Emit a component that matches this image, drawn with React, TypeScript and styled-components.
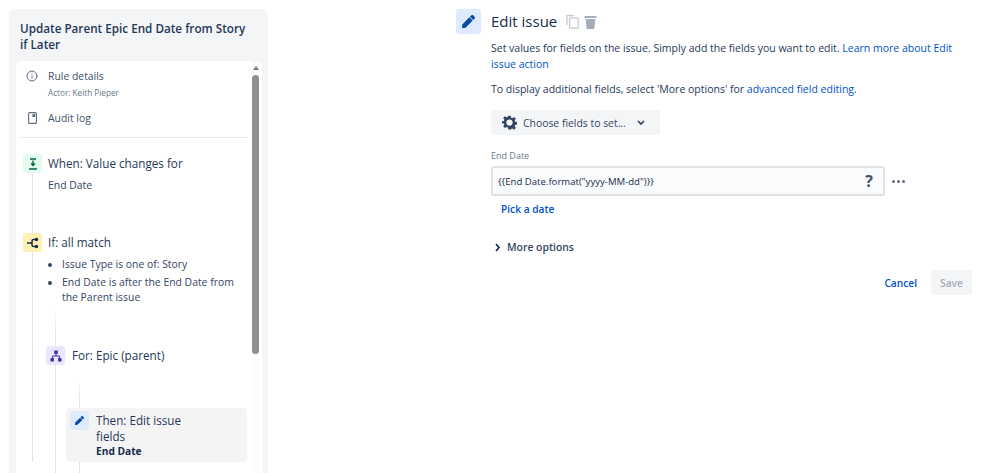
import React from 'react'
import styled, { createGlobalStyle } from 'styled-components'
import { FaPen } from 'react-icons/fa'
import { FiInfo } from 'react-icons/fi'

const GlobalStyle = createGlobalStyle`
    html, body {
        margin: 0;
        height: 473px;
        overflow: hidden;
        background: #fff;
        font-family: "Open Sans", "Noto Sans", sans-serif;
        color: #172b4d;
    }
`;

const Layout = styled.div`
    display: flex;
    align-items: flex-start;
    height: 473px;
    overflow: hidden;
`;

const Sidebar = styled.aside`
    box-sizing: border-box;
    width: 259px;
    height: 464px;
    margin: 9px 0 0 9px;
    padding: 11px 6px 0 7px;
    background: #f4f5f7;
    border-radius: 6px 6px 0 0;
    flex-shrink: 0;
`;

const SidebarTitle = styled.h2`
    margin: 0 0 9px 4px;
    width: 228px;
    font-size: 11.7px;
    line-height: 16px;
    font-weight: 600;
    color: #253858;
`;

const SidebarCard = styled.div`
    position: relative;
    height: 412px;
    background: #fff;
    border-radius: 5px 5px 0 0;
    overflow: hidden;
`;

const MetaRow = styled.div<{ $top: number }>`
    display: flex;
    gap: 9px;
    padding: ${p => p.$top}px 0 0 9px;
    color: #42526e;
`;

const MetaIcon = styled.span`
    width: 14px;
    height: 14px;
    display: flex;
    align-items: center;
    justify-content: center;
    color: #5e6c84;
    flex-shrink: 0;
`;

const MetaLabel = styled.div`
    font-size: 10.4px;
    line-height: 14px;
`;

const MetaSub = styled.div`
    font-size: 8.2px;
    line-height: 11px;
    margin-top: 4px;
    color: #6b778c;
`;

const Divider = styled.hr`
    border: 0;
    height: 1px;
    background: #e6e8ec;
    margin: 12px 15px 0 3px;
`;

const Flow = styled.div`
    position: relative;
    padding: 16px 0 0 7px;
    &::before {
        content: '';
        position: absolute;
        left: 16px;
        top: 36px;
        bottom: 0;
        width: 1px;
        background: #e2e4ea;
    }
`;

const Step = styled.div<{ $spacing?: number; $after?: number }>`
    position: relative;
    display: flex;
    gap: ${p => p.$spacing ?? 6}px;
    margin-bottom: ${p => p.$after ?? 0}px;
`;

const StepIcon = styled.span<{ $bg: string; $color: string }>`
    width: 19px;
    height: 19px;
    border-radius: 3px;
    background: ${p => p.$bg};
    color: ${p => p.$color};
    display: flex;
    align-items: center;
    justify-content: center;
    flex-shrink: 0;
    position: relative;
`;

const StepBody = styled.div`
    min-width: 0;
`;

const StepTitle = styled.div`
    font-size: 11.7px;
    line-height: 16px;
    color: #253858;
    padding-top: 1px;
`;

const StepDetail = styled.div`
    font-size: 10.4px;
    line-height: 15px;
    margin-top: 7px;
    color: #344563;
`;

const Conditions = styled.ul`
    margin: 7px 0 0;
    padding: 0 0 0 14px;
    width: 176px;
    font-size: 10.4px;
    line-height: 15px;
    color: #344563;
    li {
        margin-bottom: 3px;
    }
`;

const Nested = styled.div<{ $left: number; $top: number; $lineTop: number }>`
    position: relative;
    margin-left: ${p => p.$left}px;
    padding-top: ${p => p.$top}px;
    &::before {
        content: '';
        position: absolute;
        left: 9px;
        top: ${p => p.$lineTop}px;
        height: 400px;
        width: 1px;
        background: linear-gradient(#ffffff00, #e2e4ea 24px);
    }
`;

const ActiveStep = styled.div`
    position: relative;
    box-sizing: border-box;
    width: 181px;
    height: 54px;
    margin-left: -4px;
    padding: 3px 4px;
    display: flex;
    gap: 7px;
    background: #f4f4f4;
    border-radius: 4px;
`;

const ActiveBody = styled.div`
    padding-top: 2px;
`;

const ActiveTitle = styled.div`
    font-size: 11.7px;
    line-height: 15.5px;
    width: 90px;
    color: #253858;
`;

const ActiveDetail = styled.div`
    font-size: 10.2px;
    line-height: 15px;
    font-weight: 700;
    color: #172b4d;
`;

const ScrollTrack = styled.div`
    position: absolute;
    top: 0;
    right: 3px;
    bottom: 0;
    width: 7px;
    background: #fbfbfb;
`;

const ScrollArrow = styled.div`
    width: 0;
    height: 0;
    margin: 5px auto 5px;
    border-left: 3px solid transparent;
    border-right: 3px solid transparent;
    border-bottom: 4px solid #7a7a7a;
`;

const ScrollThumb = styled.div`
    height: 279px;
    border-radius: 4px;
    background: #8f8f8f;
`;

const Main = styled.main`
    display: flex;
    gap: 10px;
    margin: 9px 0 0 188px;
    width: 516px;
    flex-shrink: 0;
`;

const HeadIcon = styled.span`
    width: 25px;
    height: 25px;
    border-radius: 3px;
    background: #deebff;
    color: #0747a6;
    display: flex;
    align-items: center;
    justify-content: center;
    flex-shrink: 0;
`;

const Content = styled.div`
    flex: 1;
    min-width: 0;
`;

const Heading = styled.div`
    display: flex;
    align-items: center;
    gap: 5px;
    height: 25px;
    color: #a5adba;
`;

const HeadingText = styled.h1`
    margin: 0 4px 0 0;
    font-size: 15px;
    line-height: 25px;
    font-weight: 500;
    color: #172b4d;
`;

const Para = styled.p<{ $top: number }>`
    margin: ${p => p.$top}px 0 0;
    width: 470px;
    font-size: 10.5px;
    line-height: 16px;
    color: #253858;
`;

const Link = styled.a`
    color: #0052cc;
`;

const ChooseButton = styled.button`
    display: flex;
    align-items: center;
    gap: 6px;
    width: 169px;
    height: 25px;
    margin-top: 13px;
    padding: 0 0 0 11px;
    border: 0;
    border-radius: 3px;
    background: #f4f5f7;
    font-family: inherit;
    font-size: 10.4px;
    font-weight: 500;
    color: #344563;
`;

const FieldLabel = styled.div`
    margin-top: 14px;
    font-size: 9px;
    line-height: 14px;
    font-weight: 500;
    color: #6b778c;
`;

const FieldRow = styled.div`
    display: flex;
    align-items: center;
    gap: 7px;
    margin-top: 3px;
`;

const Input = styled.div`
    box-sizing: border-box;
    width: 394px;
    height: 30px;
    padding: 0 10px 0 5px;
    display: flex;
    align-items: center;
    justify-content: space-between;
    background: #fafbfc;
    border: 2px solid #dfe1e6;
    border-radius: 3px;
    font-size: 9.6px;
    color: #172b4d;
`;

const Help = styled.span`
    font-size: 16px;
    font-weight: 700;
    color: #42526e;
`;

const Dots = styled.span`
    display: flex;
    gap: 2px;
    span {
        width: 3px;
        height: 3px;
        border-radius: 50%;
        background: #5e6c84;
    }
`;

const PickDate = styled.a`
    display: block;
    margin: 6px 0 0 10px;
    font-size: 10.2px;
    line-height: 14px;
    font-weight: 600;
    color: #0052cc;
`;

const MoreOptions = styled.div`
    display: flex;
    align-items: center;
    gap: 6px;
    margin: 24px 0 0 3px;
    font-size: 10.4px;
    line-height: 14px;
    font-weight: 600;
    color: #344563;
`;

const Footer = styled.div`
    display: flex;
    justify-content: flex-end;
    align-items: center;
    gap: 14px;
    margin-top: 16px;
    width: 481px;
`;

const Cancel = styled.a`
    font-size: 10.2px;
    font-weight: 600;
    color: #0052cc;
`;

const Save = styled.button`
    width: 41px;
    height: 25px;
    border: 0;
    padding: 0;
    border-radius: 3px;
    background: #f4f5f7;
    font-family: inherit;
    font-size: 10.2px;
    font-weight: 600;
    color: #a5adba;
`;

const ValueChangedIcon = () => (
    <svg width="10" height="12" viewBox="0 0 10 12" fill="none" stroke="currentColor" strokeWidth="1.4">
        <path d="M2 1h6M5 2.5v5M3 5.5l2 2 2-2M1 11h8" />
    </svg>
)

const BranchIcon = () => (
    <svg width="12" height="12" viewBox="0 0 12 12" fill="none" stroke="currentColor" strokeWidth="1.5">
        <path d="M0 6h5M9 2.5H6.5a1.5 1.5 0 0 0-1.5 1.5v4a1.5 1.5 0 0 0 1.5 1.5H9" />
        <circle cx="9.5" cy="2.5" r="1" fill="currentColor" />
        <circle cx="9.5" cy="9.5" r="1" fill="currentColor" />
    </svg>
)

const TreeIcon = () => (
    <svg width="12" height="12" viewBox="0 0 12 12" fill="currentColor">
        <rect x="4.2" y="0.5" width="3.6" height="3.4" rx="0.6" />
        <rect x="0.5" y="8.1" width="3.4" height="3.4" rx="0.6" />
        <rect x="8.1" y="8.1" width="3.4" height="3.4" rx="0.6" />
        <path d="M5.5 3.9h1v1.7h3.3v2.5h-1V6.6H3.2v1.5h-1V5.6h3.3z" />
    </svg>
)

const AuditIcon = () => (
    <svg width="9" height="12" viewBox="0 0 9 12" fill="none" stroke="currentColor" strokeWidth="1.1">
        <rect x="0.6" y="0.6" width="7.8" height="10.8" rx="1" />
        <path d="M4.5 2h2.7v3H4.5z" fill="currentColor" stroke="none" />
    </svg>
)

const CopyIcon = () => (
    <svg width="13" height="15" viewBox="0 0 13 15" fill="none" stroke="#c1c7d0" strokeWidth="1.2">
        <path d="M1 11V1.6h7" />
        <rect x="3.6" y="3.8" width="8.6" height="10.4" rx="1" />
    </svg>
)

const TrashIcon = () => (
    <svg width="13" height="14" viewBox="0 0 13 14" fill="currentColor">
        <rect x="0.5" y="1" width="12" height="2" rx="0.5" />
        <path d="M1.6 4h9.8l-1 9.2a.9.9 0 0 1-.9.8H3.5a.9.9 0 0 1-.9-.8z" />
    </svg>
)

const GearIcon = () => (
    <svg width="15" height="15" viewBox="0 0 24 24" fill="#344563">
        <path fillRule="evenodd" d="M10 1h4l.6 3.2 2 .8 2.7-1.8 2.8 2.8-1.8 2.7.8 2 3.2.6v4l-3.2.6-.8 2 1.8 2.7-2.8 2.8-2.7-1.8-2 .8L14 23h-4l-.6-3.2-2-.8-2.7 1.8-2.8-2.8 1.8-2.7-.8-2L-.3 14v-4l3.2-.6.8-2-1.8-2.7 2.8-2.8 2.7 1.8 2-.8zM12 7a5 5 0 1 0 0 10 5 5 0 0 0 0-10z" />
    </svg>
)

const ChevronDown = () => (
    <svg width="10" height="8" viewBox="0 0 10 8" fill="none" stroke="#344563" strokeWidth="1.7" style={{ marginLeft: 4 }}>
        <path d="M2 2l3 3 3-3" />
    </svg>
)

const ChevronRight = () => (
    <svg width="7" height="9" viewBox="0 0 7 9" fill="none" stroke="#172b4d" strokeWidth="1.7">
        <path d="M2 1l3 3.5L2 8" />
    </svg>
)

export default function App() {
    return (
        <Layout>
            <GlobalStyle />
            <Sidebar>
                <SidebarTitle>Update Parent Epic End Date from Story if Later</SidebarTitle>
                <SidebarCard>
                    <MetaRow $top={8}>
                        <MetaIcon><FiInfo size={12} /></MetaIcon>
                        <div>
                            <MetaLabel>Rule details</MetaLabel>
                            <MetaSub>Actor: Keith Pieper</MetaSub>
                        </div>
                    </MetaRow>
                    <MetaRow $top={13}>
                        <MetaIcon><AuditIcon /></MetaIcon>
                        <MetaLabel>Audit log</MetaLabel>
                    </MetaRow>
                    <Divider />
                    <Flow>
                        <Step $after={40}>
                            <StepIcon $bg="#e3fcef" $color="#006644"><ValueChangedIcon /></StepIcon>
                            <StepBody>
                                <StepTitle>When: Value changes for</StepTitle>
                                <StepDetail>End Date</StepDetail>
                            </StepBody>
                        </Step>
                        <Step>
                            <StepIcon $bg="#fff0b3" $color="#172b4d"><BranchIcon /></StepIcon>
                            <StepBody>
                                <StepTitle>If: all match</StepTitle>
                                <Conditions>
                                    <li>Issue Type is one of: Story</li>
                                    <li>End Date is after the End Date from the Parent issue</li>
                                </Conditions>
                            </StepBody>
                        </Step>
                        <Nested $left={23} $top={38} $lineTop={0}>
                            <Step $spacing={7}>
                                <StepIcon $bg="#eae6ff" $color="#403294"><TreeIcon /></StepIcon>
                                <StepTitle>For: Epic (parent)</StepTitle>
                            </Step>
                            <Nested $left={24} $top={43} $lineTop={12}>
                                <ActiveStep>
                                    <StepIcon $bg="#deebff" $color="#0747a6"><FaPen size={9} /></StepIcon>
                                    <ActiveBody>
                                        <ActiveTitle>Then: Edit issue fields</ActiveTitle>
                                        <ActiveDetail>End Date</ActiveDetail>
                                    </ActiveBody>
                                </ActiveStep>
                            </Nested>
                        </Nested>
                    </Flow>
                    <ScrollTrack>
                        <ScrollArrow />
                        <ScrollThumb />
                    </ScrollTrack>
                </SidebarCard>
            </Sidebar>
            <Main>
                <HeadIcon><FaPen size={13} /></HeadIcon>
                <Content>
                    <Heading>
                        <HeadingText>Edit issue</HeadingText>
                        <CopyIcon />
                        <TrashIcon />
                    </Heading>
                    <Para $top={6}>
                        Set values for fields on the issue. Simply add the fields you want to edit. <Link>Learn more about Edit</Link>
                        <br />
                        <Link>issue action</Link>
                    </Para>
                    <Para $top={9}>
                        To display additional fields, select 'More options' for <Link>advanced field editing</Link>.
                    </Para>
                    <ChooseButton><GearIcon /> Choose fields to set... <ChevronDown /></ChooseButton>
                    <FieldLabel>End Date</FieldLabel>
                    <FieldRow>
                        <Input>
                            <span>{'{{End Date.format("yyyy-MM-dd")}}'}</span>
                            <Help>?</Help>
                        </Input>
                        <Dots><span /><span /><span /></Dots>
                    </FieldRow>
                    <PickDate>Pick a date</PickDate>
                    <MoreOptions><ChevronRight /> More options</MoreOptions>
                    <Footer>
                        <Cancel>Cancel</Cancel>
                        <Save>Save</Save>
                    </Footer>
                </Content>
            </Main>
        </Layout>
    )
}
